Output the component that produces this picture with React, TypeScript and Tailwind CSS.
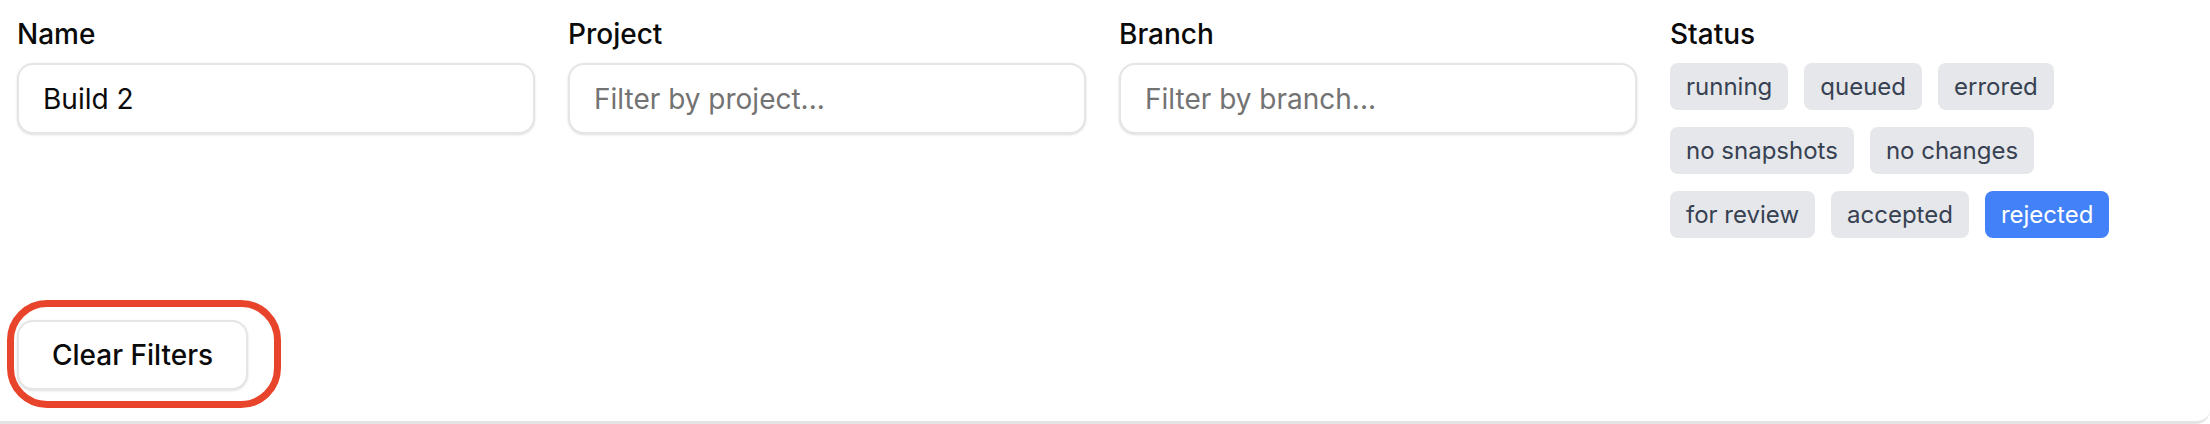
import React from "react";

const statuses: { label: string; active?: boolean }[] = [
  { label: "running" },
  { label: "queued" },
  { label: "errored" },
  { label: "no snapshots" },
  { label: "no changes" },
  { label: "for review" },
  { label: "accepted" },
  { label: "rejected", active: true },
];

function Field({ label, value, placeholder }: { label: string; value?: string; placeholder?: string }) {
  return (
    <div className="flex flex-col">
      <label className="text-[28px] leading-[40px] font-medium text-[#0a0a0a] mb-[9px]">{label}</label>
      <input
        readOnly
        defaultValue={value}
        placeholder={placeholder}
        className="h-[71px] w-full rounded-[16px] border-2 border-[#e5e5e5] bg-white px-[24px] text-[28px] text-[#0a0a0a] placeholder:text-[#737373] shadow-sm outline-none"
      />
    </div>
  );
}

export default function App() {
  return (
    <div className="w-[2210px] h-[424px] bg-white overflow-hidden" style={{ fontFamily: "Inter, 'Noto Sans', sans-serif" }}>
      <div className="relative h-[424px] bg-white border-b-[3px] border-[#e5e5e5] rounded-br-[14px] pt-[14px]">
        <div className="grid grid-cols-4 gap-x-[33px] pl-[17px] pr-[22px]">
          <Field label="Name" value="Build 2" />
          <Field label="Project" placeholder="Filter by project..." />
          <Field label="Branch" placeholder="Filter by branch..." />
          <div className="flex flex-col">
            <div className="text-[28px] leading-[40px] font-medium text-[#0a0a0a] mb-[9px]">Status</div>
            <div className="flex flex-wrap gap-x-[16px] gap-y-[17px] max-w-[510px]">
              {statuses.map((s) => (
                <button
                  key={s.label}
                  className={
                    s.active
                      ? "h-[47px] px-[16px] rounded-[8px] bg-[#4281f7] text-white text-[24px] leading-[32px]"
                      : "h-[47px] px-[16px] rounded-[8px] bg-[#e5e7eb] text-[#374151] text-[24px] leading-[32px]"
                  }
                >
                  {s.label}
                </button>
              ))}
            </div>
          </div>
        </div>
        <div className="pl-[17px] mt-[82px]">
          <button className="h-[70px] px-[33px] rounded-[16px] border-2 border-[#e5e5e5] bg-white text-[28px] font-medium text-[#0a0a0a] shadow-sm">
            Clear Filters
          </button>
        </div>
        <div className="absolute left-[7px] top-[300px] w-[274px] h-[108px] rounded-[40px] border-[7px] border-[#e8442b] pointer-events-none" />
      </div>
    </div>
  );
}
